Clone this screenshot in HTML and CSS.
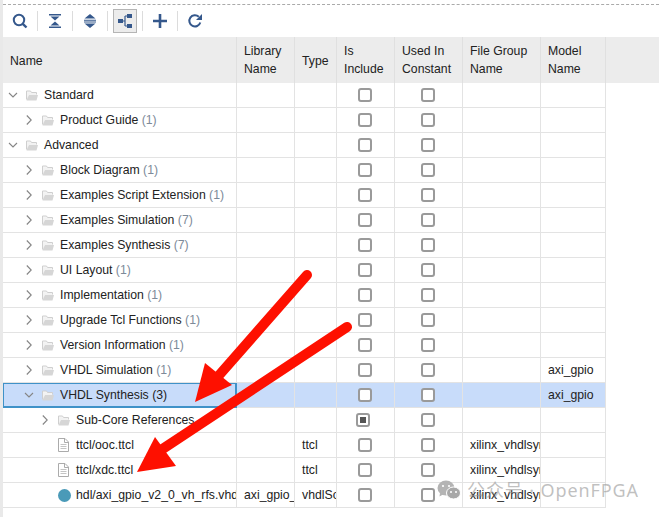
FILE: index.html
```html
<!DOCTYPE html>
<html lang="en">
<head>
<meta charset="utf-8">
<title>IP Sources</title>
<link rel="stylesheet" href="styles.css">
</head>
<body>
<svg class="defs" width="0" height="0" aria-hidden="true">
  <defs>
    <symbol id="open" viewBox="0 0 10 10"><path d="M1 3 5 7 9 3" fill="none" stroke="#858585" stroke-width="1.100"/></symbol>
    <symbol id="closed" viewBox="0 0 10 10"><path d="M2.800 .5 7.200 5 2.800 9.500" fill="none" stroke="#858585" stroke-width="1.100"/></symbol>
    <symbol id="folder" viewBox="0 0 12 11"><path d="M.5 9.500V1h4l1 1.500h5v2" fill="#f4f4f4" stroke="#cfcfcf"/><path d="M.5 10.500 2.500 5H12l-1.500 5.500z" fill="#d6d6d6"/><path d="M1.500 8V3h8v2H3z" fill="#f2f2f2"/></symbol>
    <symbol id="file" viewBox="0 0 11 14"><path d="M.5.5h6.500l3.500 3.500v9.500H.5z" fill="#fff" stroke="#ababab"/><path d="M6.500 1v3.500h4" fill="none" stroke="#ababab"/><path d="M2.500 6.500h6M2.500 8.500h6M2.500 10.500h6" stroke="#c4c4c4"/></symbol>
  </defs>
</svg>
<main class="app">
  <div class="dash"></div>
  <div class="toolbar">
    <button class="tool"><svg viewBox="0 0 16 16"><circle cx="7" cy="7" r="5.200" fill="none" stroke="#35588c" stroke-width="2"/><path d="M10.800 10.800 14.500 14.500" stroke="#35588c" stroke-width="2.400"/></svg></button>
    <span class="sep"></span>
    <button class="tool"><svg viewBox="0 0 16 16"><path d="M2 1h12v1.500H2zM2 13.500h12V15H2zM3.500 3.500h9L8 7.500zM3.500 12.500h9L8 8.500z" fill="#35588c"/></svg></button>
    <span class="sep"></span>
    <button class="tool"><svg viewBox="0 0 16 16"><path d="M8 1 13.500 5.500h-11zM8 15 2.500 10.500h11zM2 6.800h12v1H2zM2 8.500h12v1H2z" fill="#35588c"/></svg></button>
    <span class="sep"></span>
    <button class="tool active"><svg viewBox="0 0 16 16"><path d="M1 6h5v4H1zM10 1h5v4h-5zM10 11h5v4h-5z" fill="#35588c"/><path d="M5 8h3M8 3v10M8 3h3M8 13h3" fill="none" stroke="#35588c" stroke-width="1.200"/></svg></button>
    <span class="sep"></span>
    <button class="tool"><svg viewBox="0 0 16 16"><path d="M6.700 1h2.600v5.700H15v2.600H9.300V15H6.700V9.300H1V6.700h5.700z" fill="#35588c"/></svg></button>
    <span class="sep"></span>
    <button class="tool"><svg viewBox="0 0 16 16"><path d="M13.300 9.500A5.600 5.600 0 1 1 11.800 3.800" fill="none" stroke="#35588c" stroke-width="2"/><path d="M15 1v6H9z" fill="#35588c"/></svg></button>
  </div>
  <div class="head">
    <div class="row head-row">
      <div class="cell">Name</div><div class="cell">Library<br>Name</div><div class="cell">Type</div><div class="cell">Is<br>Include</div><div class="cell">Used In<br>Constant</div><div class="cell">File Group<br>Name</div><div class="cell">Model<br>Name</div>
    </div>
  </div>
  <div class="body">
    <div class="row"><div class="cell name l0"><svg class="chev"><use href="#open"/></svg><svg class="ico"><use href="#folder"/></svg><span>Standard</span></div><div class="cell"></div><div class="cell"></div><div class="cell chk"><i class="box"></i></div><div class="cell chk"><i class="box"></i></div><div class="cell"></div><div class="cell"></div></div>
    <div class="row"><div class="cell name l1"><svg class="chev"><use href="#closed"/></svg><svg class="ico"><use href="#folder"/></svg><span>Product Guide <em>(1)</em></span></div><div class="cell"></div><div class="cell"></div><div class="cell chk"><i class="box"></i></div><div class="cell chk"><i class="box"></i></div><div class="cell"></div><div class="cell"></div></div>
    <div class="row"><div class="cell name l0"><svg class="chev"><use href="#open"/></svg><svg class="ico"><use href="#folder"/></svg><span>Advanced</span></div><div class="cell"></div><div class="cell"></div><div class="cell chk"><i class="box"></i></div><div class="cell chk"><i class="box"></i></div><div class="cell"></div><div class="cell"></div></div>
    <div class="row"><div class="cell name l1"><svg class="chev"><use href="#closed"/></svg><svg class="ico"><use href="#folder"/></svg><span>Block Diagram <em>(1)</em></span></div><div class="cell"></div><div class="cell"></div><div class="cell chk"><i class="box"></i></div><div class="cell chk"><i class="box"></i></div><div class="cell"></div><div class="cell"></div></div>
    <div class="row"><div class="cell name l1"><svg class="chev"><use href="#closed"/></svg><svg class="ico"><use href="#folder"/></svg><span>Examples Script Extension <em>(1)</em></span></div><div class="cell"></div><div class="cell"></div><div class="cell chk"><i class="box"></i></div><div class="cell chk"><i class="box"></i></div><div class="cell"></div><div class="cell"></div></div>
    <div class="row"><div class="cell name l1"><svg class="chev"><use href="#closed"/></svg><svg class="ico"><use href="#folder"/></svg><span>Examples Simulation <em>(7)</em></span></div><div class="cell"></div><div class="cell"></div><div class="cell chk"><i class="box"></i></div><div class="cell chk"><i class="box"></i></div><div class="cell"></div><div class="cell"></div></div>
    <div class="row"><div class="cell name l1"><svg class="chev"><use href="#closed"/></svg><svg class="ico"><use href="#folder"/></svg><span>Examples Synthesis <em>(7)</em></span></div><div class="cell"></div><div class="cell"></div><div class="cell chk"><i class="box"></i></div><div class="cell chk"><i class="box"></i></div><div class="cell"></div><div class="cell"></div></div>
    <div class="row"><div class="cell name l1"><svg class="chev"><use href="#closed"/></svg><svg class="ico"><use href="#folder"/></svg><span>UI Layout <em>(1)</em></span></div><div class="cell"></div><div class="cell"></div><div class="cell chk"><i class="box"></i></div><div class="cell chk"><i class="box"></i></div><div class="cell"></div><div class="cell"></div></div>
    <div class="row"><div class="cell name l1"><svg class="chev"><use href="#closed"/></svg><svg class="ico"><use href="#folder"/></svg><span>Implementation <em>(1)</em></span></div><div class="cell"></div><div class="cell"></div><div class="cell chk"><i class="box"></i></div><div class="cell chk"><i class="box"></i></div><div class="cell"></div><div class="cell"></div></div>
    <div class="row"><div class="cell name l1"><svg class="chev"><use href="#closed"/></svg><svg class="ico"><use href="#folder"/></svg><span>Upgrade Tcl Functions <em>(1)</em></span></div><div class="cell"></div><div class="cell"></div><div class="cell chk"><i class="box"></i></div><div class="cell chk"><i class="box"></i></div><div class="cell"></div><div class="cell"></div></div>
    <div class="row"><div class="cell name l1"><svg class="chev"><use href="#closed"/></svg><svg class="ico"><use href="#folder"/></svg><span>Version Information <em>(1)</em></span></div><div class="cell"></div><div class="cell"></div><div class="cell chk"><i class="box"></i></div><div class="cell chk"><i class="box"></i></div><div class="cell"></div><div class="cell"></div></div>
    <div class="row"><div class="cell name l1"><svg class="chev"><use href="#closed"/></svg><svg class="ico"><use href="#folder"/></svg><span>VHDL Simulation <em>(1)</em></span></div><div class="cell"></div><div class="cell"></div><div class="cell chk"><i class="box"></i></div><div class="cell chk"><i class="box"></i></div><div class="cell"></div><div class="cell">axi_gpio</div></div>
    <div class="row selected"><div class="cell name l1"><svg class="chev"><use href="#open"/></svg><svg class="ico"><use href="#folder"/></svg><span>VHDL Synthesis (3)</span></div><div class="cell"></div><div class="cell"></div><div class="cell chk"><i class="box"></i></div><div class="cell chk"><i class="box"></i></div><div class="cell"></div><div class="cell">axi_gpio</div></div>
    <div class="row"><div class="cell name l2"><svg class="chev"><use href="#closed"/></svg><svg class="ico"><use href="#folder"/></svg><span>Sub-Core References</span></div><div class="cell"></div><div class="cell"></div><div class="cell chk"><i class="box on"></i></div><div class="cell chk"><i class="box"></i></div><div class="cell"></div><div class="cell"></div></div>
    <div class="row"><div class="cell name leaf"><svg class="ico"><use href="#file"/></svg><span>ttcl/ooc.ttcl</span></div><div class="cell"></div><div class="cell">ttcl</div><div class="cell chk"><i class="box"></i></div><div class="cell chk"><i class="box"></i></div><div class="cell">xilinx_vhdlsynthesis</div><div class="cell"></div></div>
    <div class="row"><div class="cell name leaf"><svg class="ico"><use href="#file"/></svg><span>ttcl/xdc.ttcl</span></div><div class="cell"></div><div class="cell">ttcl</div><div class="cell chk"><i class="box"></i></div><div class="cell chk"><i class="box"></i></div><div class="cell">xilinx_vhdlsynthesis</div><div class="cell"></div></div>
    <div class="row"><div class="cell name leaf"><i class="dot"></i><span>hdl/axi_gpio_v2_0_vh_rfs.vhd</span></div><div class="cell">axi_gpio_v2_0_0</div><div class="cell">vhdlSource</div><div class="cell chk"><i class="box"></i></div><div class="cell chk"><i class="box"></i></div><div class="cell">xilinx_vhdlsynthesis</div><div class="cell"></div></div>
  </div>
</main>
<svg class="arrows" viewBox="0 0 659 517" aria-hidden="true">
  <path d="M307 275 214 381" stroke="#fe1000" stroke-width="10" stroke-linecap="round" fill="none"/>
  <path d="M205 363 195 402 232 385z" fill="#fe1000"/>
  <path d="M347 327 158 452" stroke="#fe1000" stroke-width="10" stroke-linecap="round" fill="none"/>
  <path d="M155 437 137 472 176 466z" fill="#fe1000"/>
</svg>
<div class="mark">
  <svg viewBox="0 0 24 20"><ellipse cx="9" cy="8" rx="8.500" ry="7.500" fill="#b4b4b4"/><path d="M3 13 2.500 16.500 7 14z" fill="#b4b4b4"/><ellipse cx="16.500" cy="13" rx="7" ry="6" fill="#a8a8a8" stroke="#fff"/><circle cx="6" cy="6" r="1.100" fill="#fff"/><circle cx="12" cy="6" r="1.100" fill="#fff"/><circle cx="14" cy="12" r="1" fill="#fff"/><circle cx="19" cy="12" r="1" fill="#fff"/></svg>
  <span>公众号 · OpenFPGA</span>
</div>
</body>
</html>
```
FILE: styles.css
```css
* { box-sizing: border-box; }
html, body { margin: 0; height: 100%; }
body {
  position: relative;
  width: 659px;
  height: 517px;
  overflow: hidden;
  background: #fff;
  font: 12.25px/18px "Liberation Sans", Arial, sans-serif;
  color: #222;
}
.defs { position: absolute; }
.app {
  height: 517px;
  border-left: 3px solid #e9e9e9;
}
.dash {
  height: 5px;
  border-bottom: 1px dashed #aaa;
}
.toolbar {
  height: 32px;
  display: flex;
  align-items: center;
  padding-left: 5px;
}
.tool {
  width: 24px;
  height: 24px;
  padding: 0;
  display: flex;
  align-items: center;
  justify-content: center;
  background: none;
  border: 1px solid transparent;
}
.tool svg { width: 16px; height: 16px; }
.tool.active { background: #ececec; border-color: #b5b5b5; }
.sep {
  width: 1px;
  height: 20px;
  margin: 0 5px;
  background: #dcdcdc;
}
.head {
  background: #ececec;
  height: 46px;
}
.row {
  display: grid;
  grid-template-columns: 234px 58px 42px 58px 68px 78px 65px;
  width: 603px;
  height: 25px;
}
.head-row { height: 46px; }
.cell {
  display: flex;
  align-items: center;
  padding-left: 7px;
  border-right: 1px solid #e3e3e3;
  border-bottom: 1px solid #e3e3e3;
  white-space: nowrap;
  overflow: hidden;
}
.head-row .cell {
  display: block;
  padding-top: 5px;
  border-bottom: 0;
  border-color: #e0e0e0;
}
.head-row .cell:first-child, .head-row .cell:nth-child(3) { padding-top: 15px; }
.name span { margin-left: 6px; }
.name em { font-style: normal; color: #7d8a99; }
.chev { width: 10px; height: 10px; flex: none; margin-right: 8px; }
.ico { width: 12px; height: 11px; flex: none; }
.l0 { padding-left: 5px; }
.l1 { padding-left: 21px; }
.l2 { padding-left: 37px; }
.leaf { padding-left: 55px; }
.leaf .ico { width: 11px; height: 14px; margin-right: 1px; }
.dot {
  width: 13px;
  height: 13px;
  flex: none;
  border-radius: 50%;
  background: #4a9ab8;
  margin-right: -1px;
}
.chk { padding: 0 1px 0 0; justify-content: center; }
.box {
  width: 14px;
  height: 14px;
  border: 2px solid #9a9a9a;
  border-radius: 3px;
  background: #fff;
}
.box.on {
  margin-right: 4px;
  padding: 2px;
  background: #555 content-box;
}
.selected .cell { background: #c8dcfa; }
.selected .name { box-shadow: inset 0 0 0 1px #3f92c8; border-color: #3f92c8; }
.arrows {
  position: absolute;
  left: 0;
  top: 0;
  width: 659px;
  height: 517px;
  pointer-events: none;
}
.mark {
  position: absolute;
  left: 437px;
  top: 478px;
  display: flex;
  align-items: center;
  gap: 6px;
  font: 18px/24px "Noto Sans", "Noto Sans CJK SC", sans-serif;
  letter-spacing: .9px;
  color: rgba(150, 150, 150, .6);
  pointer-events: none;
}
.mark svg { width: 24px; height: 20px; }
```
